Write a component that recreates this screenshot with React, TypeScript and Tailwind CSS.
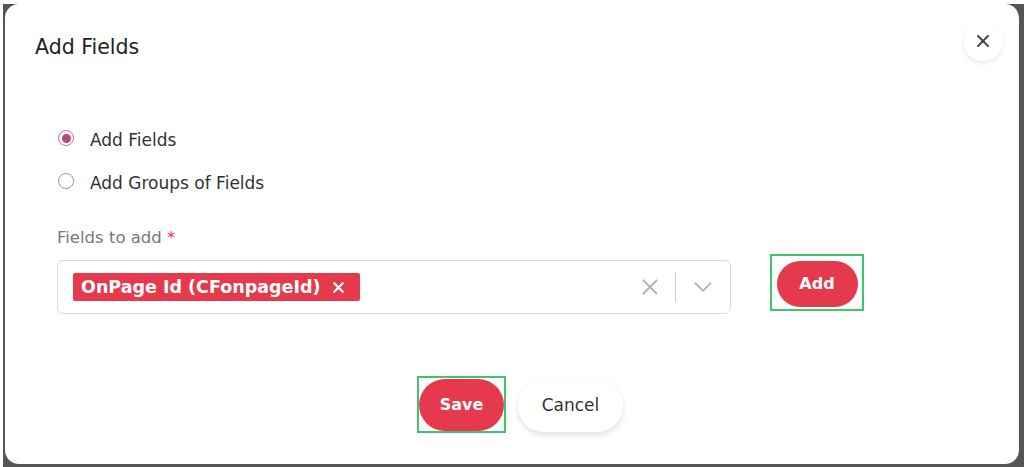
import { X, ChevronDown } from "lucide-react";

const font = { fontFamily: '"DejaVu Sans", "Liberation Sans", sans-serif' };

function Radio({ checked, label }: { checked?: boolean; label: string }) {
  return (
    <label className="flex h-5 items-center gap-4">
      <span
        className={`ml-[1px] flex h-4 w-4 items-center justify-center rounded-full border-[1.5px] ${
          checked ? "border-[#d36a98]" : "border-[#9a9a9a]"
        }`}
      >
        {checked && <span className="h-[9px] w-[9px] rounded-full bg-[#b9477f]" />}
      </span>
      <span className="translate-y-[2px] text-[17px] leading-5 text-[#333]">{label}</span>
    </label>
  );
}

export default function App() {
  return (
    <div className="h-[467px] w-[1024px] overflow-hidden bg-white pl-[3px] pt-[4px]" style={font}>
      <div className="h-full bg-[#555] pb-[3px] pl-[2px] pr-[5px]">
        <div className="h-full rounded-[14px] bg-white">
          {/* header */}
          <div className="flex items-start justify-between pl-[30px] pr-[16px] pt-[17px]">
            <h2 className="mt-[12px] text-[20.5px] leading-[28px] text-[#222]">Add Fields</h2>
            <button className="flex h-10 w-10 items-center justify-center rounded-full bg-white text-[#444] shadow-[0_2px_4px_rgba(0,0,0,0.1)]">
              <X size={20} strokeWidth={2.4} />
            </button>
          </div>

          {/* body */}
          <div className="pl-[52px]">
            <div className="mt-[67px] flex flex-col gap-[23px]">
              <Radio checked label="Add Fields" />
              <Radio label="Add Groups of Fields" />
            </div>

            <p className="mt-[37px] text-[16.5px] leading-5 text-[#777]">
              Fields to add <span className="text-[#e5394d]">*</span>
            </p>

            <div className="mt-3 flex items-start">
              <div className="flex h-[54px] w-[674px] items-center rounded-[6px] border border-[#d9d9d9] pl-[15px] pr-[12px]">
                <span className="flex h-[28px] items-center rounded-[2px] bg-[#e63a4c] pl-2 pr-[13px] text-[17.5px] font-semibold text-white">
                  OnPage Id (CFonpageId)
                  <X size={17} strokeWidth={3.2} className="ml-[10px]" />
                </span>
                <div className="ml-auto flex items-center text-[#b8b8b8]">
                  <X size={26} strokeWidth={2} />
                  <span className="mx-[12px] h-[30px] w-[1.5px] bg-[#cfcfcf]" />
                  <ChevronDown size={30} strokeWidth={1.6} />
                </div>
              </div>
              <div className="-mt-[6px] ml-[39px] flex h-[57px] w-[94px] items-center justify-center border-2 border-[#3cc86a]">
                <button className="mt-[3px] h-[46px] w-[81px] rounded-full bg-[#e5394d] text-[16px] font-semibold text-white">
                  Add
                </button>
              </div>
            </div>
          </div>

          {/* footer */}
          <div className="mt-[62px] flex items-center justify-center pl-[16px]">
            <div className="flex h-[57px] w-[89px] items-center justify-center border-2 border-[#3cc86a]">
              <button className="h-[52px] w-[85px] rounded-full bg-[#e5394d] text-[16px] font-semibold text-white">
                Save
              </button>
            </div>
            <button className="ml-3 mt-[3px] h-[52px] w-[105px] rounded-full bg-white text-[17px] text-[#333] shadow-[0_3px_6px_rgba(0,0,0,0.12)]">
              Cancel
            </button>
          </div>
        </div>
      </div>
    </div>
  );
}
